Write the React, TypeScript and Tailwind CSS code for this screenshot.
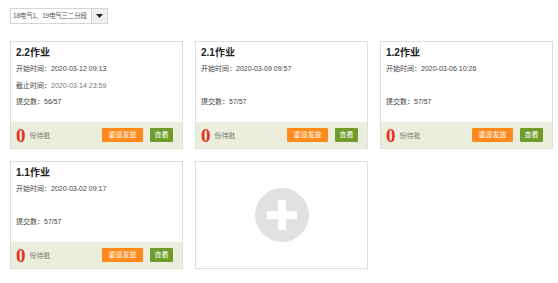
import React from 'react';

type Task = {
  title: string;
  start: string;
  end?: string;
  submitted: string;
};

const tasks: Task[] = [
  { title: '2.2作业', start: '2020-03-12 09:13', end: '2020-03-14 23:59', submitted: '56/57' },
  { title: '2.1作业', start: '2020-03-09 09:57', submitted: '57/57' },
  { title: '1.2作业', start: '2020-03-06 10:26', submitted: '57/57' },
  { title: '1.1作业', start: '2020-03-02 09:17', submitted: '57/57' },
];

function TaskCard({ task }: { task: Task }) {
  return (
    <div className="flex h-[108px] flex-col border border-[#dedede] bg-white">
      <div className="flex-1 px-[5px] pt-[5px] text-[#444]">
        <div className="text-[10px] font-bold leading-[12px] text-[#222]">{task.title}</div>
        <div className="mt-[2px] text-[7px] leading-[16.5px]">开始时间：{task.start}</div>
        <div className="text-[7px] leading-[16.5px]">
          {task.end ? (
            <>
              截止时间：<span className="text-[#777]">{task.end}</span>
            </>
          ) : (
            '\u00a0'
          )}
        </div>
        <div className="text-[7px] leading-[16.5px]">提交数：{task.submitted}</div>
      </div>
      <div className="flex h-[26px] items-center bg-[#ebeedc] pl-[5px] pr-[9px]">
        <span className="font-['Liberation_Serif',serif] text-[19px] font-bold leading-none text-[#e8321e]">0</span>
        <span className="ml-[4px] mt-[3px] text-[7px] text-[#777]">份待批</span>
        <div className="ml-auto flex gap-[7px]">
          <button className="h-[14px] w-[41px] rounded-[1px] bg-[#ff8a1c] text-[7px] leading-[14px] text-white">
            重设发放
          </button>
          <button className="h-[14px] w-[23px] rounded-[1px] bg-[#709c2c] text-[7px] leading-[14px] text-white">
            查看
          </button>
        </div>
      </div>
    </div>
  );
}

function AddCard() {
  return (
    <div className="flex h-[108px] items-center justify-center border border-[#dedede] bg-white">
      <svg width="54" height="54" viewBox="0 0 54 54">
        <circle cx="27" cy="27" r="27" fill="#e1e1e1" />
        <rect x="23" y="12" width="8" height="30" fill="#fff" />
        <rect x="12" y="23" width="30" height="8" fill="#fff" />
      </svg>
    </div>
  );
}

export default function App() {
  return (
    <div
      className="h-[283px] w-[558px] bg-white pl-[10px] pt-[8px]"
      style={{ fontFamily: '"Liberation Sans", "Noto Sans CJK SC", sans-serif' }}
    >
      <div className="flex h-[16px]">
        <div className="flex w-[82px] items-center whitespace-nowrap border border-[#d6d6d6] pl-[2px] text-[6.5px] tracking-[-0.2px] text-[#555]">
          18电气1、19电气三二分段
        </div>
        <div className="flex w-[16px] items-center justify-center border border-l-0 border-[#d6d6d6] bg-[#efefef]">
          <svg width="7" height="4" viewBox="0 0 7 4">
            <path d="M0 0h7L3.5 4z" fill="#222" />
          </svg>
        </div>
      </div>
      <div className="mt-[17px] grid w-[542px] grid-cols-[173px_173px_173px] gap-x-[12px] gap-y-[12px]">
        {tasks.map((t) => (
          <TaskCard key={t.title} task={t} />
        ))}
        <AddCard />
      </div>
    </div>
  );
}
